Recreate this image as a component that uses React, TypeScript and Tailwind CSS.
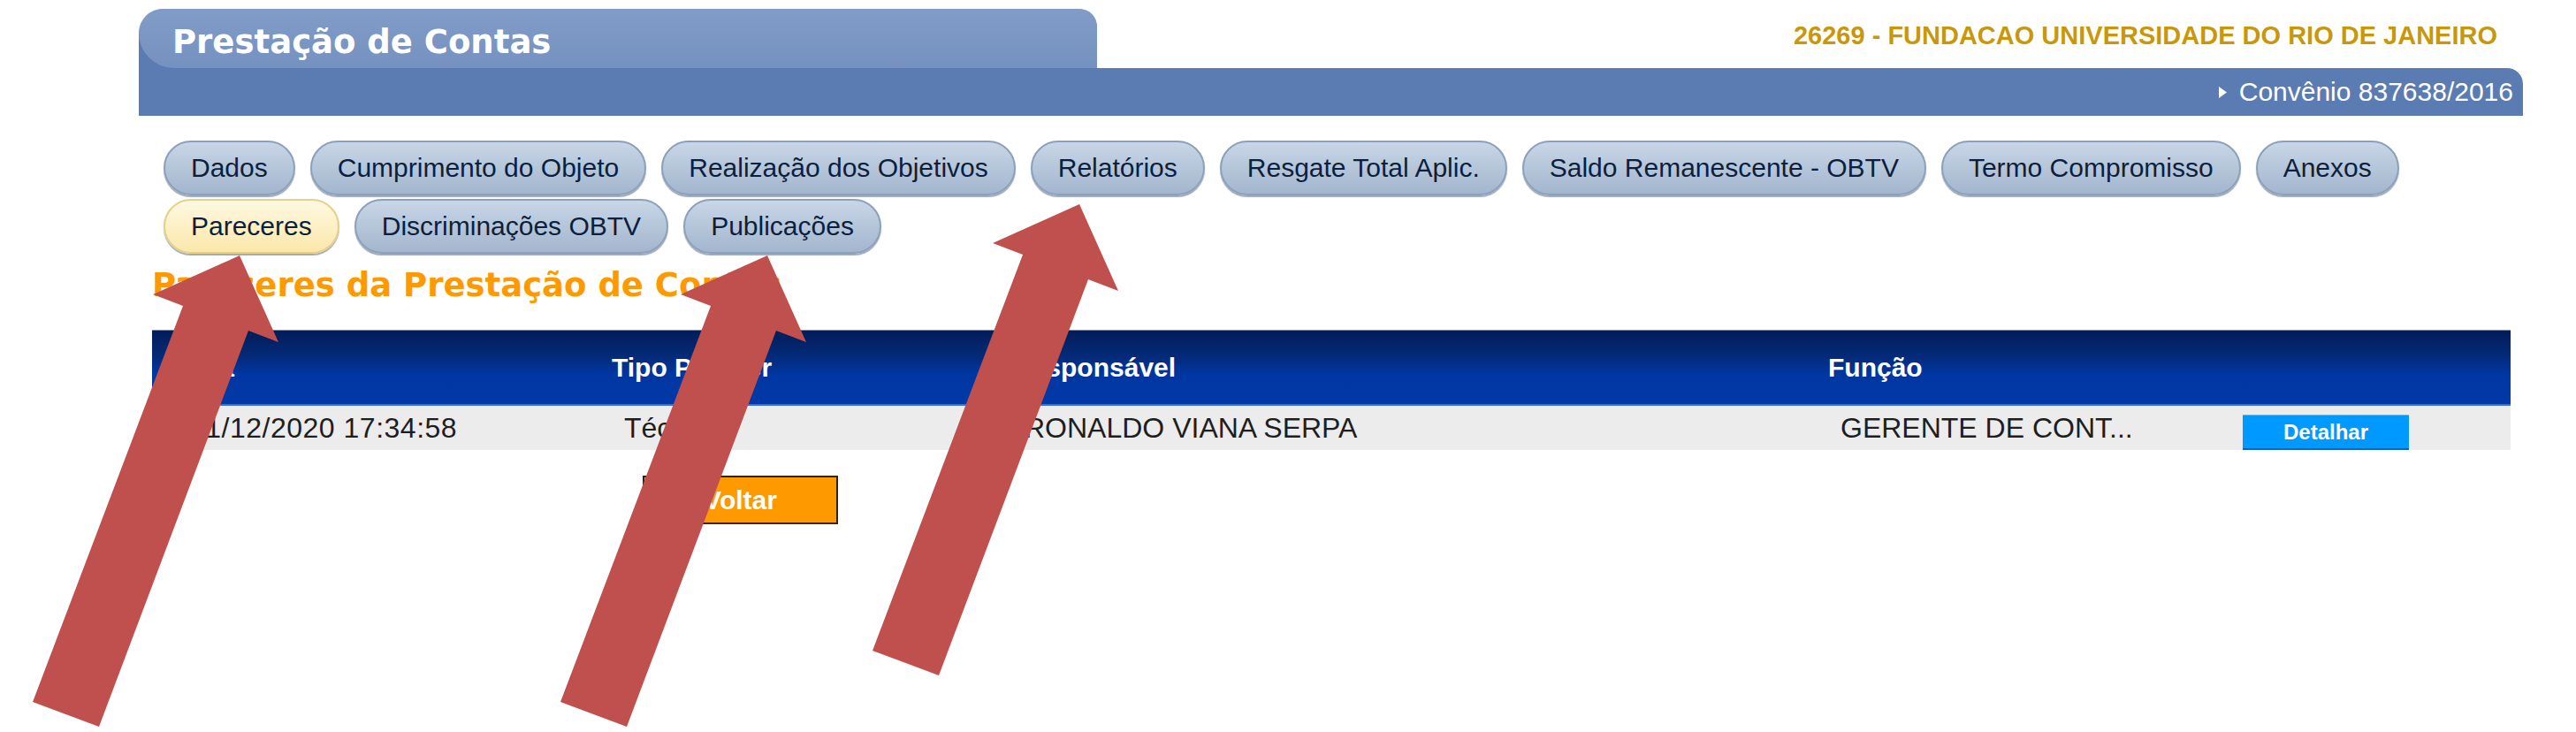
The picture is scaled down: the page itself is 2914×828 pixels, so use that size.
import React from "react";

const row1 = [
  "Dados",
  "Cumprimento do Objeto",
  "Realização dos Objetivos",
  "Relatórios",
  "Resgate Total Aplic.",
  "Saldo Remanescente - OBTV",
  "Termo Compromisso",
  "Anexos",
];
const row2 = ["Pareceres", "Discriminações OBTV", "Publicações"];

const Tab = ({ label, active }: { label: string; active?: boolean }) => (
  <div
    className={
      "h-[62px] px-[29px] rounded-full border-2 flex items-center whitespace-nowrap text-[30px] leading-none text-[#0c1f3d] shadow-[0_2px_1px_rgba(60,80,110,0.5)] " +
      (active
        ? "border-[#e6cf86] bg-[linear-gradient(to_bottom,#fff9e2,#fbe7aa)]"
        : "border-[#8ba0bb] bg-[linear-gradient(to_bottom,#c8d6e6,#a3b6ce)]")
    }
  >
    {label}
  </div>
);

const ARROW = "37,794 207,346 173,333 271,289 315,387 281,374 112,822";

export default function App() {
  return (
    <div className="relative w-[2914px] h-[828px] bg-white overflow-hidden font-['Liberation_Sans',Arial,sans-serif]">
      <div className="pl-[157px] pt-[10px]">
        <div className="w-[2697px]">
          {/* Title tab + org name */}
          <div className="flex justify-between">
            <div className="w-[1084px] h-[67px] bg-[#5b7cb2] rounded-tl-[30px] rounded-tr-[22px]">
              <div className="h-full bg-[linear-gradient(to_bottom,#819cc7,#7591bf)] rounded-tl-[30px] rounded-tr-[22px] rounded-bl-[44px] flex items-center pl-[38px] pt-[8px]">
                <span className="font-['DejaVu_Sans',sans-serif] font-bold text-[37px] leading-none text-white">
                  Prestação de Contas
                </span>
              </div>
            </div>
            <div className="mt-[16px] pr-[29px] text-[29px] leading-none font-bold text-[#c8980c]">
              26269 - FUNDACAO UNIVERSIDADE DO RIO DE JANEIRO
            </div>
          </div>

          {/* Bar */}
          <div className="h-[54px] bg-[#5b7cb2] rounded-tr-[18px] flex items-center justify-end pr-[11px] gap-[14px]">
            <svg width="9" height="13" viewBox="0 0 9 13">
              <polygon points="0,0 9,6.5 0,13" fill="#ffffff" />
            </svg>
            <span className="text-[30px] leading-none text-white">Convênio 837638/2016</span>
          </div>

          {/* Tabs */}
          <div className="mt-[28px] pl-[28px] flex flex-col gap-[4px]">
            <div className="flex gap-[17px]">
              {row1.map((t) => (
                <Tab key={t} label={t} />
              ))}
            </div>
            <div className="flex gap-[17px]">
              {row2.map((t) => (
                <Tab key={t} label={t} active={t === "Pareceres"} />
              ))}
            </div>
          </div>
        </div>

        {/* Heading */}
        <div className="mt-[17px] pl-[15px] font-['DejaVu_Sans',sans-serif] font-bold text-[37px] leading-none text-[#ff9900]">
          Pareceres da Prestação de Contas
        </div>

        {/* Table */}
        <div className="mt-[32px] ml-[15px] w-[2668px]">
          <div className="h-[86px] grid grid-cols-[492px_453px_923px_497px_1fr] items-center border-t border-[#6f8fc4] border-b-2 border-b-[#3f6fc2] bg-[linear-gradient(to_bottom,#021d58_0%,#042a78_35%,#0036a0_58%,#0039a8_100%)] text-white font-bold text-[30px] leading-none">
            <div className="pl-[28px]">Data</div>
            <div className="pl-[28px]">Tipo Parecer</div>
            <div className="pl-[28px]">Responsável</div>
            <div className="pl-[28px]">Função</div>
            <div />
          </div>
          <div className="h-[50px] grid grid-cols-[492px_453px_923px_497px_1fr] items-center bg-[#ececec] text-[32px] leading-none text-[#1e1e1e]">
            <div className="pl-[42px] tracking-[0.5px]">01/12/2020 17:34:58</div>
            <div className="pl-[42px]">Técnico</div>
            <div className="pl-[42px]">RONALDO VIANA SERPA</div>
            <div className="pl-[42px]">GERENTE DE CONT...</div>
            <div className="self-end">
              <button className="w-[188px] h-[40px] bg-[#0099ff] border-t border-t-[#5cb9ff] border-b-2 border-b-[#1c5fae] text-white font-bold text-[24px] leading-none">
                Detalhar
              </button>
            </div>
          </div>
        </div>

        {/* Voltar */}
        <div className="mt-[29px] pl-[570px]">
          <button className="w-[221px] h-[55px] bg-[#ff9900] border-2 border-[#2e2410] text-white font-bold text-[30px] leading-none">
            Voltar
          </button>
        </div>
      </div>

      {/* Annotation arrows */}
      <svg
        className="absolute inset-0 pointer-events-none"
        width="2914"
        height="828"
        viewBox="0 0 2914 828"
      >
        <polygon points={ARROW} fill="#c0504d" />
        <polygon points={ARROW} fill="#c0504d" transform="translate(597,0)" />
        <polygon points={ARROW} fill="#c0504d" transform="translate(950,-58)" />
      </svg>
    </div>
  );
}
